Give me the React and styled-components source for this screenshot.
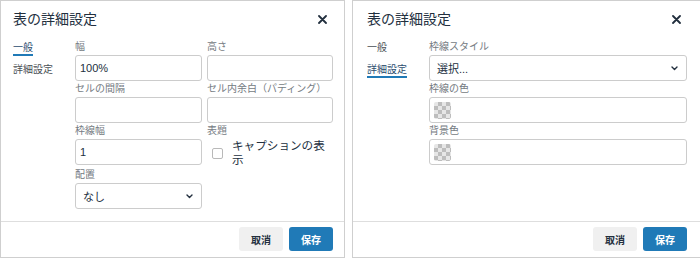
import React from "react";
import styled, { createGlobalStyle } from "styled-components";

const GlobalStyle = createGlobalStyle`
  html, body { margin: 0; padding: 0; background: #fff; overflow: hidden; }
  body { font-family: "Liberation Sans", "Noto Sans CJK JP", sans-serif; }
  * { box-sizing: border-box; }
`;

const Page = styled.div`
  display: flex;
  gap: 7px;
  width: 700px;
  height: 258px;
  overflow: hidden;
`;

const Dialog = styled.div`
  flex: none;
  width: ${(p) => p.$width}px;
  height: 258px;
  border: 1px solid #cfcfcf;
  display: flex;
  flex-direction: column;
  background: #fff;
`;

const Header = styled.div`
  height: 36px;
  display: flex;
  align-items: center;
  justify-content: space-between;
  padding: 0 ${(p) => p.$right}px 0 ${(p) => p.$left}px;
`;

const Title = styled.div`
  font-size: 14px;
  line-height: 18px;
  color: #222f3e;
`;

const Close = styled.div`
  width: 12px;
  height: 12px;
  display: flex;
  align-items: center;
  justify-content: center;
  margin-right: 5px;
`;

const Body = styled.div`
  flex: 1;
  display: flex;
  padding: 2px ${(p) => p.$right}px 0 ${(p) => p.$left}px;
`;

const Nav = styled.div`
  width: 62px;
  flex: none;
  display: flex;
  flex-direction: column;
  align-items: flex-start;
  padding-top: 3px;
  gap: 8px;
`;

const Tab = styled.div`
  font-size: 10px;
  line-height: 12px;
  color: ${(p) => (p.$active ? "#2b4c6e" : "#4a4f55")};
  border-bottom: 2px solid ${(p) => (p.$active ? "#207ab7" : "transparent")};
`;

const Form = styled.div`
  display: grid;
  grid-template-columns: ${(p) => p.$cols};
  column-gap: 5px;
  align-content: start;
`;

const Field = styled.div`
  display: flex;
  flex-direction: column;
`;

const Label = styled.div`
  font-size: 10px;
  line-height: 16px;
  height: 16px;
  color: #757b82;
  white-space: nowrap;
`;

const Input = styled.div`
  height: 26px;
  border: 1px solid #cccccc;
  border-radius: 3px;
  display: flex;
  align-items: center;
  padding: 0 4px;
  font-size: 11px;
  color: #222f3e;
`;

const Select = styled(Input)`
  justify-content: space-between;
  padding: 0 8px 0 7px;
`;

const Swatch = styled.div`
  width: 17px;
  height: 17px;
  border-radius: 2px;
  background-color: #e6e6e6;
  background-image:
    linear-gradient(45deg, #bdbdbd 25%, transparent 25%, transparent 75%, #bdbdbd 75%),
    linear-gradient(45deg, #bdbdbd 25%, transparent 25%, transparent 75%, #bdbdbd 75%);
  background-size: 8px 8px;
  background-position: 0 0, 4px 4px;
`;

const CheckRow = styled.div`
  display: flex;
  align-items: center;
  padding-left: 5px;
  gap: 9px;
`;

const Checkbox = styled.div`
  width: 11px;
  height: 11px;
  flex: none;
  border: 1px solid #b9b9b9;
  border-radius: 2px;
  background: #fff;
`;

const CheckText = styled.div`
  font-size: 11.6px;
  line-height: 14px;
  color: #222f3e;
`;

const Footer = styled.div`
  border-top: 1px solid #dedede;
  display: flex;
  justify-content: flex-end;
  gap: 6px;
  padding: 5px ${(p) => p.$right}px 6px 0;
`;

const Button = styled.button`
  width: 44px;
  height: 24px;
  border-radius: 3px;
  border: none;
  font-family: "Liberation Sans", "Noto Sans CJK JP", sans-serif;
  font-size: 10px;
  font-weight: bold;
  padding: 0;
  color: ${(p) => (p.$primary ? "#ffffff" : "#222f3e")};
  background: ${(p) => (p.$primary ? "#207ab7" : "#f0f0f0")};
`;

const CloseIcon = () => (
  <svg width="9" height="9" viewBox="0 0 9 9">
    <path d="M1 1 L8 8 M8 1 L1 8" stroke="#222f3e" strokeWidth="1.8" strokeLinecap="round" />
  </svg>
);

const Chevron = () => (
  <svg width="7" height="5" viewBox="0 0 7 5">
    <path d="M1 1 L3.5 3.5 L6 1" stroke="#222f3e" strokeWidth="1.4" fill="none" strokeLinecap="round" strokeLinejoin="round" />
  </svg>
);

function DialogFrame({ width, left, right, active, children }) {
  return (
    <Dialog $width={width}>
      <Header $left={left} $right={right}>
        <Title>表の詳細設定</Title>
        <Close>
          <CloseIcon />
        </Close>
      </Header>
      <Body $left={left} $right={right}>
        <Nav>
          <Tab $active={active === 0}>一般</Tab>
          <Tab $active={active === 1}>詳細設定</Tab>
        </Nav>
        {children}
      </Body>
      <Footer $right={right}>
        <Button>取消</Button>
        <Button $primary>保存</Button>
      </Footer>
    </Dialog>
  );
}

export default function App() {
  return (
    <>
      <GlobalStyle />
      <Page>
        <DialogFrame width={345} left={12} right={11} active={0}>
          <Form $cols="127px 126px">
            <Field>
              <Label>幅</Label>
              <Input>100%</Input>
            </Field>
            <Field>
              <Label>高さ</Label>
              <Input />
            </Field>
            <Field>
              <Label>セルの間隔</Label>
              <Input />
            </Field>
            <Field>
              <Label>セル内余白（パディング）</Label>
              <Input />
            </Field>
            <Field>
              <Label>枠線幅</Label>
              <Input>1</Input>
            </Field>
            <Field>
              <Label>表題</Label>
              <CheckRow>
                <Checkbox />
                <CheckText>キャプションの表示</CheckText>
              </CheckRow>
            </Field>
            <Field>
              <Label>配置</Label>
              <Select>
                <span>なし</span>
                <Chevron />
              </Select>
            </Field>
          </Form>
        </DialogFrame>
        <DialogFrame width={349} left={14} right={13} active={1}>
          <Form $cols="258px">
            <Field>
              <Label>枠線スタイル</Label>
              <Select>
                <span>選択...</span>
                <Chevron />
              </Select>
            </Field>
            <Field>
              <Label>枠線の色</Label>
              <Input>
                <Swatch />
              </Input>
            </Field>
            <Field>
              <Label>背景色</Label>
              <Input>
                <Swatch />
              </Input>
            </Field>
          </Form>
        </DialogFrame>
      </Page>
    </>
  );
}
